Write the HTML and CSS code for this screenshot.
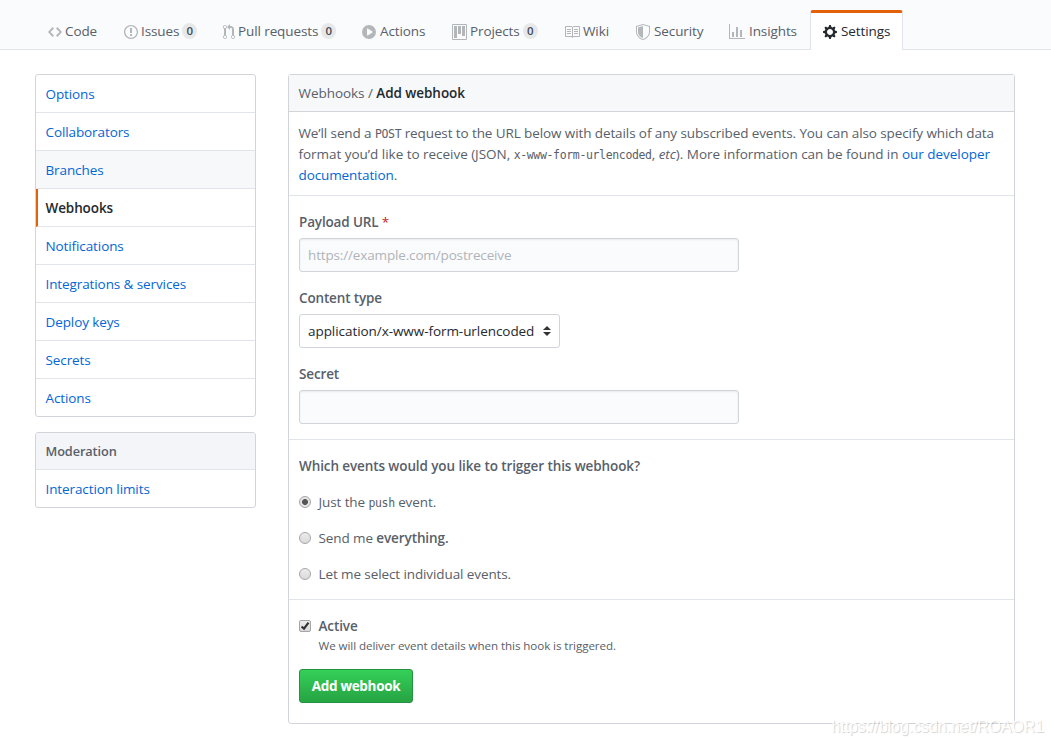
FILE: index.html
```
<!DOCTYPE html>
<html lang="en">

<head>
	<meta charset="utf-8">
	<title>Add webhook</title>
	<link rel="stylesheet" href="styles.css">
</head>

<body>
	<nav class="reponav">
		<a class="tab tab-code" href="#"><svg width="14" height="16" viewBox="0 0 14 16"><path fill-rule="evenodd" d="M9.5 3L8 4.5 11.5 8 8 11.5 9.5 13 14 8 9.5 3zm-5 0L0 8l4.500 5L6 11.500 2.500 8 6 4.500 4.500 3z"/></svg><span>Code</span></a>
		<a class="tab tab-issues" href="#"><svg width="14" height="16" viewBox="0 0 14 16"><path fill-rule="evenodd" d="M7 2.300c3.140 0 5.700 2.560 5.700 5.700s-2.560 5.700-5.700 5.700A5.710 5.710 0 0 1 1.300 8c0-3.140 2.560-5.700 5.700-5.700zM7 1C3.140 1 0 4.140 0 8s3.140 7 7 7 7-3.140 7-7-3.140-7-7-7zm1 3H6v5h2V4zm0 6H6v2h2v-2z"/></svg><span>Issues</span><b class="counter">0</b></a>
		<a class="tab tab-pulls" href="#"><svg width="12" height="16" viewBox="0 0 12 16"><path fill-rule="evenodd" d="M11 11.280V5c-.030-.780-.340-1.470-.940-2.060C9.460 2.350 8.780 2.030 8 2H7V0L4 3l3 3V4h1c.270.020.480.110.690.310.210.200.300.420.310.690v6.280A1.993 1.993 0 0 0 10 15a1.993 1.993 0 0 0 1-3.720zm-1 2.920c-.660 0-1.200-.550-1.200-1.200 0-.650.550-1.200 1.200-1.200.650 0 1.200.550 1.200 1.200 0 .650-.550 1.200-1.200 1.200zM4 3c0-1.110-.890-2-2-2a1.993 1.993 0 0 0-1 3.720v6.560A1.993 1.993 0 0 0 2 15a1.993 1.993 0 0 0 1-3.720V4.720c.590-.340 1-.980 1-1.720zm-.800 10c0 .660-.550 1.200-1.200 1.200-.650 0-1.200-.550-1.200-1.200 0-.650.550-1.200 1.200-1.200.650 0 1.200.550 1.200 1.200zM2 4.200C1.340 4.200.800 3.650.800 3c0-.650.550-1.200 1.200-1.200.650 0 1.200.550 1.200 1.200 0 .650-.550 1.200-1.200 1.200z"/></svg><span>Pull requests</span><b class="counter">0</b></a>
		<a class="tab tab-actions" href="#"><svg width="14" height="16" viewBox="0 0 14 16"><path fill-rule="evenodd" d="M14 8A7 7 0 1 1 0 8a7 7 0 0 1 14 0zm-8.223 3.482l4.599-3.066a.5.5 0 0 0 0-.832L5.777 4.518A.5.5 0 0 0 5 4.934v6.132a.5.5 0 0 0 .777.416z"/></svg><span>Actions</span></a>
		<a class="tab tab-projects" href="#"><svg width="15" height="16" viewBox="0 0 15 16"><path fill-rule="evenodd" d="M10 12h3V2h-3v10zm-4-2h3V2H6v8zm-4 4h3V2H2v12zm-1 1h13V1H1v14zM14 0H1a1 1 0 0 0-1 1v14a1 1 0 0 0 1 1h13a1 1 0 0 0 1-1V1a1 1 0 0 0-1-1z"/></svg><span>Projects</span><b class="counter">0</b></a>
		<a class="tab tab-wiki" href="#"><svg width="16" height="16" viewBox="0 0 16 16"><path fill-rule="evenodd" d="M3 5h4v1H3V5zm0 3h4V7H3v1zm0 2h4V9H3v1zm11-5h-4v1h4V5zm0 2h-4v1h4V7zm0 2h-4v1h4V9zm2-6v9c0 .550-.450 1-1 1H9.500l-1 1-1-1H2c-.550 0-1-.450-1-1V3c0-.550.450-1 1-1h5.500l1 1 1-1H15c.550 0 1 .450 1 1zm-8 .500L7.500 3H2v9h6V3.500zm7-.500H9.500l-.500.500V12h6V3z"/></svg><span>Wiki</span></a>
		<a class="tab tab-security" href="#"><svg width="14" height="16" viewBox="0 0 14 16"><path fill-rule="evenodd" d="M0 2l7-2 7 2v6.020C14 12.690 8.690 16 7 16c-1.690 0-7-3.310-7-7.980V2zm1 .750L7 1l6 1.750v5.268C13 12.104 8.449 15 7 15c-1.449 0-6-2.896-6-6.982V2.750zm1 .750L7 2v12c-1.207 0-5-2.482-5-5.985V3.500z"/></svg><span>Security</span></a>
		<a class="tab tab-insights" href="#"><svg width="16" height="16" viewBox="0 0 16 16"><path fill-rule="evenodd" d="M16 14v1H0V0h1v14h15zM5 13H3V8h2v5zm4 0H7V3h2v10zm4 0h-2V6h2v7z"/></svg><span>Insights</span></a>
		<a class="tab tab-settings selected" href="#"><svg width="14" height="16" viewBox="0 0 14 16"><path fill-rule="evenodd" d="M14 8.770v-1.600l-1.940-.640-.450-1.090.880-1.840-1.130-1.130-1.810.910-1.090-.450-.690-1.920h-1.600l-.630 1.940-1.110.450-1.840-.880-1.130 1.130.910 1.810-.450 1.090L0 7.230v1.590l1.940.640.450 1.090-.880 1.840 1.130 1.130 1.810-.910 1.090.450.690 1.920h1.590l.630-1.940 1.110-.450 1.840.880 1.130-1.130-.920-1.810.470-1.090L14 8.750v.020zM7 11c-1.660 0-3-1.340-3-3s1.340-3 3-3 3 1.340 3 3-1.340 3-3 3z"/></svg><span>Settings</span></a>
	</nav>

	<main class="container">
		<aside class="sidebar">
			<div class="menu">
				<a href="#">Options</a>
				<a href="#">Collaborators</a>
				<a href="#" class="hover">Branches</a>
				<a href="#" class="current">Webhooks</a>
				<a href="#">Notifications</a>
				<a href="#">Integrations &amp; services</a>
				<a href="#">Deploy keys</a>
				<a href="#">Secrets</a>
				<a href="#">Actions</a>
			</div>
			<div class="menu">
				<h3>Moderation</h3>
				<a href="#">Interaction limits</a>
			</div>
		</aside>

		<form class="box">
			<h2 class="box-header">Webhooks / <strong>Add webhook</strong></h2>
			<p class="intro">
				<span class="line">We’ll send a <code>POST</code> request to the URL below with details of any subscribed events. You can also specify which data</span>
				<span class="line line-wide">format you’d like to receive (JSON, <code>x-www-form-urlencoded</code>, <em>etc</em>). More information can be found in <a href="#">our developer</a></span>
				<span class="line"><a href="#">documentation</a>.</span>
			</p>
			<div class="section fields">
				<label for="url">Payload URL <span class="required">*</span></label>
				<input id="url" class="text" type="text" placeholder="https://example.com/postreceive">
				<label for="type">Content type</label>
				<select id="type" class="select">
					<option>application/x-www-form-urlencoded</option>
				</select>
				<label for="secret">Secret</label>
				<input id="secret" class="text" type="text">
			</div>
			<div class="section events">
				<h4>Which events would you like to trigger this webhook?</h4>
				<label class="choice"><input type="radio" name="events" checked><span>Just the <code>push</code> event.</span></label>
				<label class="choice"><input type="radio" name="events"><span>Send me <strong>everything.</strong></span></label>
				<label class="choice"><input type="radio" name="events"><span>Let me select individual events.</span></label>
			</div>
			<div class="section active">
				<label class="choice"><input type="checkbox" checked><strong>Active</strong></label>
				<p class="note">We will deliver event details when this hook is triggered.</p>
				<button class="btn" type="button">Add webhook</button>
			</div>
		</form>
	</main>
	<div class="watermark">https://blog.csdn.net/ROAOR1</div>
</body>

</html>
```
FILE: styles.css
```
* {
	box-sizing: border-box;
}

body {
	margin: 0;
	height: 745px;
	overflow: hidden;
	position: relative;
	background: #fff;
	color: #586069;
	font: 13.5px/21px "Open Sans", "Noto Sans", sans-serif;
	letter-spacing: -0.1px;
}

a {
	color: #0366d6;
	text-decoration: none;
}

strong,
h3,
h4 {
	font-weight: 600;
}

h2,
h3,
h4,
p {
	margin: 0;
	font-size: inherit;
}

code {
	font: 11.5px "DejaVu Sans Mono", monospace;
	letter-spacing: -0.35px;
}

/* Repository tabs */
.reponav {
	display: flex;
	height: 50px;
	padding: 10px 0 0 35px;
	background: #fafbfc;
	border-bottom: 1px solid #e1e4e8;
}

.tab {
	display: flex;
	flex: none;
	align-items: flex-start;
	height: 40px;
	padding: 8px 0 0 12px;
	border: 1px solid transparent;
	border-top: 3px solid transparent;
	border-bottom: 0;
	color: #586069;
	white-space: nowrap;
}

.tab svg {
	flex: none;
	margin: 3px 3px 0 0;
	fill: #b4b7ba;
}

.tab-code { width: 76px; }
.tab-issues { width: 99px; }
.tab-pulls { width: 139px; }
.tab-actions { width: 90px; }
.tab-projects { width: 112px; }
.tab-wiki { width: 72px; }
.tab-security { width: 93px; }
.tab-insights { width: 94px; }
.tab-settings { width: 93px; }

.tab-actions svg,
.tab-security svg,
.tab-insights svg,
.tab-settings svg {
	margin-right: 4px;
}

.tab.selected {
	background: #fff;
	border-color: #e36209 #e1e4e8 transparent;
	border-radius: 3px 3px 0 0;
	color: #24292e;
}

.tab.selected svg {
	fill: #24292e;
}

.counter {
	width: 15px;
	height: 16px;
	margin: 2px 0 0 3px;
	border-radius: 8px;
	background: #e7e8ea;
	color: #444d56;
	font-size: 11.5px;
	font-weight: 600;
	line-height: 16px;
	text-align: center;
}

.container {
	display: grid;
	grid-template-columns: 221px 727px;
	column-gap: 32px;
	align-items: start;
	padding: 24px 0 0 35px;
}

/* Sidebar */
.menu {
	margin-bottom: 15px;
	border: 1px solid #d1d5da;
	border-radius: 3px;
	overflow: hidden;
}

.menu a,
.menu h3 {
	display: block;
	height: 38px;
	padding: 9px 9.5px 7px;
	border-bottom: 1px solid #e1e4e8;
}

.menu a:last-child {
	height: 37px;
	border-bottom: 0;
}

.menu .hover {
	background: #f6f8fa;
}

.menu .current {
	padding-left: 7.5px;
	border-left: 2px solid #e36209;
	color: #24292e;
	font-weight: 600;
}

.menu h3 {
	height: 37px;
	padding-top: 8px;
	background: #f3f5f8;
	font-size: 12.75px;
}

/* Webhook form */
.box {
	height: 650px;
	border: 1px solid #d1d5da;
	border-radius: 3px;
}

.box-header {
	height: 37px;
	padding: 8px 9.5px;
	background: #f6f8fa;
	border-bottom: 1px solid #d1d5da;
	font-weight: 400;
	letter-spacing: -0.05px;
}

.box-header strong {
	color: #24292e;
}

.intro {
	height: 84px;
	padding: 11px 9.5px 0;
	border-bottom: 1px solid #e1e4e8;
}

.line {
	display: block;
	height: 21px;
	white-space: nowrap;
}

.line-wide {
	letter-spacing: -0.03px;
}

.section {
	padding: 15px 10px 0;
	border-bottom: 1px solid #e1e4e8;
}

.section:last-child {
	border-bottom: 0;
}

.fields {
	display: flex;
	flex-direction: column;
	align-items: flex-start;
	height: 244px;
}

.fields label {
	height: 27px;
	padding-top: 1px;
	font-weight: 600;
	letter-spacing: -0.15px;
}

.required {
	color: #cb2431;
	font-weight: 400;
}

.text,
.select {
	height: 34px;
	margin: 0 0 15px;
	padding: 0 8px;
	border: 1px solid #d1d5da;
	border-radius: 3px;
	font: inherit;
	letter-spacing: inherit;
}

.text {
	width: 440px;
	background: #fafbfc;
	box-shadow: inset 0 1px 2px rgba(27, 31, 35, 0.075);
}

.text::placeholder {
	color: #b0b4ba;
	letter-spacing: -0.15px;
}

.select {
	-webkit-appearance: none;
	appearance: none;
	width: 261px;
	color: #24292e;
	letter-spacing: -0.06px;
	background: #fff url("data:image/svg+xml,%3Csvg xmlns='http://www.w3.org/2000/svg' width='8' height='10'%3E%3Cpath fill='%23333' d='M0 4l4-4 4 4zM0 6h8l-4 4z'/%3E%3C/svg%3E") no-repeat right 8px center;
}

.events {
	height: 160px;
}

.events h4 {
	height: 36px;
	padding-top: 1px;
}

.choice {
	display: flex;
	align-items: center;
	height: 21px;
}

.events .choice {
	margin-bottom: 15px;
}

.events .choice span {
	padding-top: 2px;
}

.choice input {
	-webkit-appearance: none;
	appearance: none;
	flex: none;
	width: 12px;
	height: 12px;
	margin: 0 7.5px 0 0;
	border: 1px solid #a5a5a5;
	background: linear-gradient(#ececec, #dadada);
}

.choice input[type="radio"] {
	border-radius: 50%;
}

.choice input[type="radio"]:checked {
	background: radial-gradient(circle at center, #555 0 2.6px, #e4e4e4 3.3px);
}

.choice input[type="checkbox"] {
	border-radius: 2px;
	background: url("data:image/svg+xml,%3Csvg xmlns='http://www.w3.org/2000/svg' viewBox='0 0 10 10'%3E%3Cpath fill='none' stroke='%23333' stroke-width='2.2' d='M1.6 5.500L4 7.700 8.500 1.700'/%3E%3C/svg%3E") center no-repeat, linear-gradient(#ececec, #dadada);
}

.active .choice {
	padding-top: 1px;
}

.note {
	margin: -1px 0 13px 19.5px;
	font-size: 11.6px;
	letter-spacing: -0.07px;
}

.btn {
	display: block;
	width: 114px;
	height: 34px;
	padding: 0;
	border: 1px solid #269140;
	border-radius: 3px;
	background: linear-gradient(#34d058, #28a745 90%);
	color: #fff;
	font: 700 13.5px/20px "Open Sans", "Noto Sans", sans-serif;
	letter-spacing: -0.3px;
}

.watermark {
	position: absolute;
	right: 7px;
	bottom: 8px;
	color: #fff;
	font: 15.8px/20px "Liberation Sans", Arial, sans-serif;
	letter-spacing: 0;
	text-shadow: 1px 1px 1px rgba(0, 0, 0, 0.18);
}
```
